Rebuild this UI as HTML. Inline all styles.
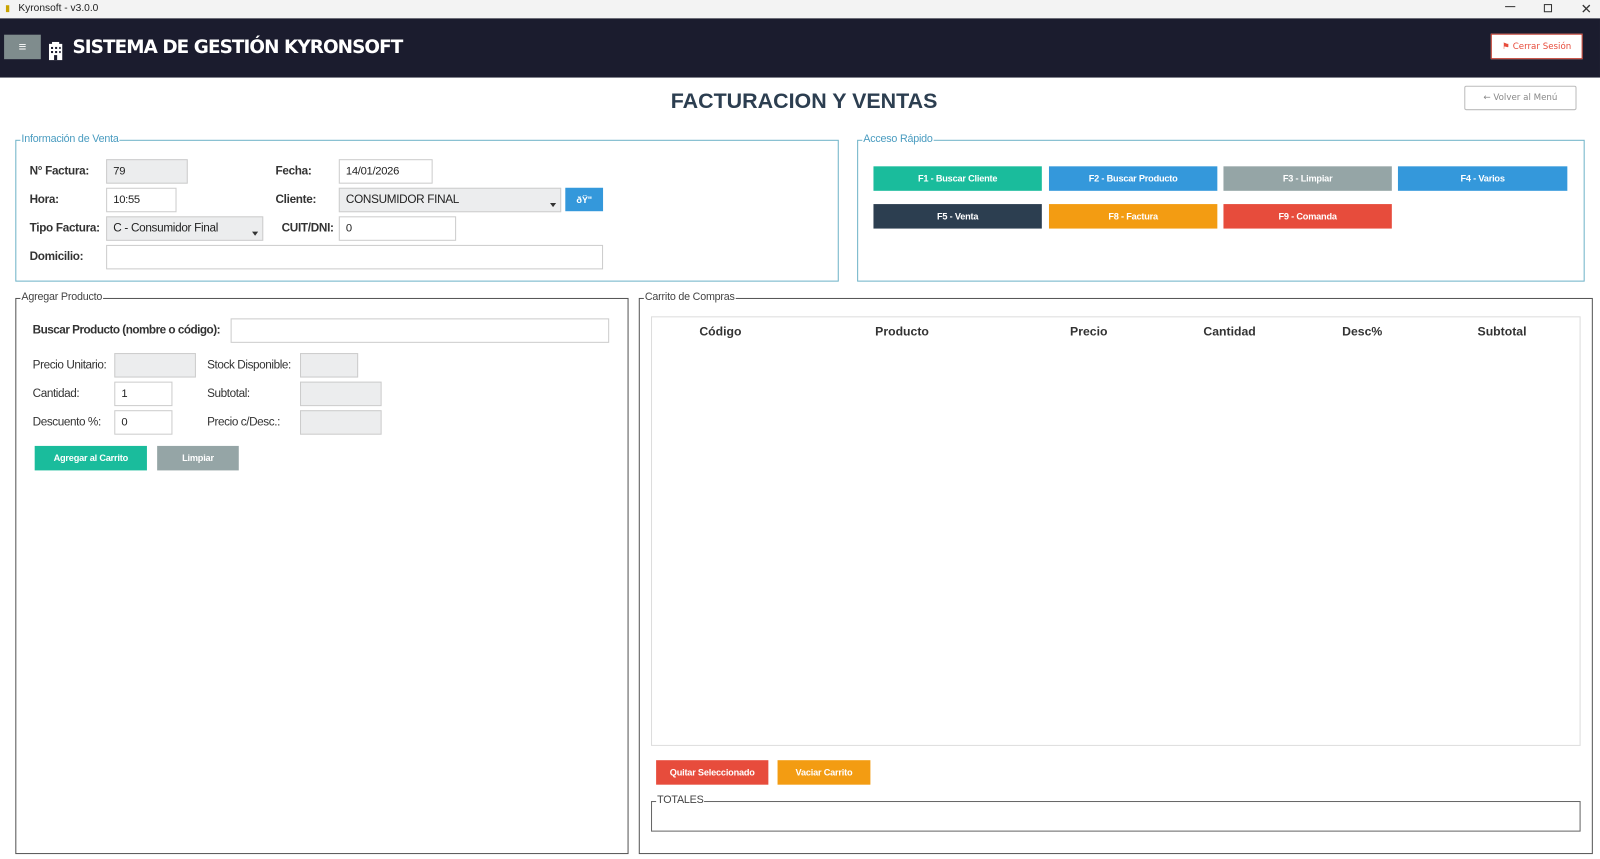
<!DOCTYPE html>
<html><head><meta charset="utf-8"><style>
*{box-sizing:border-box;margin:0;padding:0}
body{width:1600px;height:859px;position:relative;background:#fff;font-family:"Liberation Sans",sans-serif;overflow:hidden;color:#222}
#w{position:absolute;left:0;top:0;width:1568px;height:842px;transform:scale(1.0204);transform-origin:0 0}
.a{position:absolute}
.fs{position:absolute;border:1px solid #6fb3c8}
.fs2{position:absolute;border:1px solid #555}
.lg{position:absolute;top:-8px;left:4px;background:#fff;font-size:10.5px;padding:0 1px;letter-spacing:-0.2px}
.lbl{position:absolute;font-size:11.5px;font-weight:bold;color:#333;letter-spacing:-0.3px}
.l2{position:absolute;font-size:11.5px;color:#333;letter-spacing:-0.4px}
.in{position:absolute;border:1px solid #ccc;background:#fff;font-size:11px;padding-left:6px;display:flex;align-items:center;letter-spacing:-0.3px}
.ro{background:#ecedee}
.btn{position:absolute;color:#fff;font-size:9px;font-weight:bold;display:flex;align-items:center;justify-content:center;letter-spacing:-0.2px}
.th{position:absolute;top:318px;font-size:12px;font-weight:bold;color:#333;transform:translateX(-50%)}
.arr{position:absolute;right:4px;bottom:4px;width:0;height:0;border-left:3px solid transparent;border-right:3px solid transparent;border-top:4px solid #333}
</style></head><body><div id="w">
<div class="a" style="left:0;top:0;width:1568px;height:18px;background:#f3f3f3"></div>
<div class="a" style="left:5px;top:3px;font-size:9px;color:#c9a300">▮</div>
<div class="a" style="left:18px;top:3px;font-size:10px;color:#222">Kyronsoft - v3.0.0</div>
<div class="a" style="left:1475px;top:6px;width:10px;height:1px;background:#333"></div>
<div class="a" style="left:1513px;top:4px;width:8px;height:8px;border:1px solid #333"></div>
<div class="a" style="left:1549px;top:1px;font-size:13px;color:#333">✕</div>
<div class="a" style="left:0;top:18px;width:1568px;height:58px;background:#1b1c2e"></div>
<div class="a" style="left:4px;top:34px;width:36px;height:24px;background:#7f8c8d;color:#fff;font-size:13px;text-align:center;line-height:24px">≡</div>
<svg class="a" style="left:46px;top:41px" width="17" height="18" viewBox="0 0 17 18"><rect x="2" y="2" width="13" height="16" fill="#fff"/><rect x="5" y="0" width="7" height="3" fill="#fff"/><g fill="#1b1c2e"><rect x="4" y="5" width="2" height="2"/><rect x="8" y="5" width="2" height="2"/><rect x="12" y="5" width="1.5" height="2"/><rect x="4" y="9" width="2" height="2"/><rect x="8" y="9" width="2" height="2"/><rect x="12" y="9" width="1.5" height="2"/><rect x="7" y="13" width="3" height="5"/></g></svg>
<div class="a" style="left:71px;top:36px;font-size:18px;font-weight:bold;color:#fff;font-family:'DejaVu Sans',sans-serif;letter-spacing:-0.9px">SISTEMA DE GESTIÓN KYRONSOFT</div>
<div class="a" style="left:1461px;top:33px;width:90px;height:25px;background:#fff;border:1px solid #c0392b;color:#e74c3c;font-size:8.5px;display:flex;align-items:center;justify-content:center;font-family:'DejaVu Sans',sans-serif">⚑ Cerrar Sesión</div>
<div class="a" style="left:588px;top:88px;width:400px;text-align:center;font-size:21px;font-weight:bold;color:#2c3e50">FACTURACION Y VENTAS</div>
<div class="a" style="left:1435px;top:84px;width:110px;height:24px;border:1px solid #bbb;border-radius:2px;color:#888;font-size:8.5px;display:flex;align-items:center;justify-content:center;font-family:'DejaVu Sans',sans-serif">← Volver al Menú</div>

<div class="fs" style="left:15px;top:137px;width:807px;height:139px"><div class="lg" style="color:#4a9cc0">Información de Venta</div></div>
<div class="lbl" style="left:29px;top:162px">N° Factura:</div>
<div class="in ro" style="left:104px;top:156px;width:80px;height:24px">79</div>
<div class="lbl" style="left:270px;top:162px">Fecha:</div>
<div class="in" style="left:332px;top:156px;width:92px;height:24px">14/01/2026</div>
<div class="lbl" style="left:29px;top:190px">Hora:</div>
<div class="in" style="left:104px;top:184px;width:69px;height:24px">10:55</div>
<div class="lbl" style="left:270px;top:190px">Cliente:</div>
<div class="in ro" style="left:332px;top:184px;width:218px;height:24px;font-size:11.5px">CONSUMIDOR FINAL<div class="arr"></div></div>
<div class="btn" style="left:554px;top:184px;width:37px;height:23px;background:#3498db;font-size:9px">ðŸ"</div>
<div class="lbl" style="left:29px;top:218px">Tipo Factura:</div>
<div class="in ro" style="left:104px;top:212px;width:154px;height:24px;font-size:11.5px">C - Consumidor Final<div class="arr"></div></div>
<div class="lbl" style="left:276px;top:218px">CUIT/DNI:</div>
<div class="in" style="left:332px;top:212px;width:115px;height:24px">0</div>
<div class="lbl" style="left:29px;top:246px">Domicilio:</div>
<div class="in" style="left:104px;top:240px;width:487px;height:24px"></div>

<div class="fs" style="left:840px;top:137px;width:713px;height:139px"><div class="lg" style="color:#4a9cc0">Acceso Rápido</div></div>
<div class="btn" style="left:856px;top:163px;width:165px;height:24px;background:#1abc9c">F1 - Buscar Cliente</div>
<div class="btn" style="left:1028px;top:163px;width:165px;height:24px;background:#3498db">F2 - Buscar Producto</div>
<div class="btn" style="left:1199px;top:163px;width:165px;height:24px;background:#95a5a6">F3 - Limpiar</div>
<div class="btn" style="left:1370px;top:163px;width:166px;height:24px;background:#3498db">F4 - Varios</div>
<div class="btn" style="left:856px;top:200px;width:165px;height:24px;background:#2c3e50">F5 - Venta</div>
<div class="btn" style="left:1028px;top:200px;width:165px;height:24px;background:#f39c12">F8 - Factura</div>
<div class="btn" style="left:1199px;top:200px;width:165px;height:24px;background:#e74c3c">F9 - Comanda</div>

<div class="fs2" style="left:15px;top:292px;width:601px;height:545px"><div class="lg" style="color:#444">Agregar Producto</div></div>
<div class="lbl" style="left:32px;top:318px;letter-spacing:-0.5px">Buscar Producto (nombre o código):</div>
<div class="in" style="left:226px;top:312px;width:371px;height:24px"></div>
<div class="l2" style="left:32px;top:352px">Precio Unitario:</div>
<div class="in ro" style="left:112px;top:346px;width:80px;height:24px"></div>
<div class="l2" style="left:203px;top:352px">Stock Disponible:</div>
<div class="in ro" style="left:294px;top:346px;width:57px;height:24px"></div>
<div class="l2" style="left:32px;top:380px">Cantidad:</div>
<div class="in" style="left:112px;top:374px;width:57px;height:24px">1</div>
<div class="l2" style="left:203px;top:380px">Subtotal:</div>
<div class="in ro" style="left:294px;top:374px;width:80px;height:24px"></div>
<div class="l2" style="left:32px;top:408px">Descuento %:</div>
<div class="in" style="left:112px;top:402px;width:57px;height:24px">0</div>
<div class="l2" style="left:203px;top:408px">Precio c/Desc.:</div>
<div class="in ro" style="left:294px;top:402px;width:80px;height:24px"></div>
<div class="btn" style="left:34px;top:437px;width:110px;height:24px;background:#1abc9c">Agregar al Carrito</div>
<div class="btn" style="left:154px;top:437px;width:80px;height:24px;background:#95a5a6">Limpiar</div>

<div class="fs2" style="left:626px;top:292px;width:935px;height:545px"><div class="lg" style="color:#444">Carrito de Compras</div></div>
<div class="a" style="left:638px;top:310px;width:911px;height:421px;border:1px solid #ddd"></div>
<div class="th" style="left:706px">Código</div>
<div class="th" style="left:884px">Producto</div>
<div class="th" style="left:1067px">Precio</div>
<div class="th" style="left:1205px">Cantidad</div>
<div class="th" style="left:1335px">Desc%</div>
<div class="th" style="left:1472px">Subtotal</div>
<div class="btn" style="left:643px;top:745px;width:110px;height:24px;background:#e74c3c">Quitar Seleccionado</div>
<div class="btn" style="left:762px;top:745px;width:91px;height:24px;background:#f39c12">Vaciar Carrito</div>
<div class="fs2" style="left:638px;top:785px;width:911px;height:30px;border-color:#666"><div class="lg" style="color:#444">TOTALES</div></div>
</div></body></html>
